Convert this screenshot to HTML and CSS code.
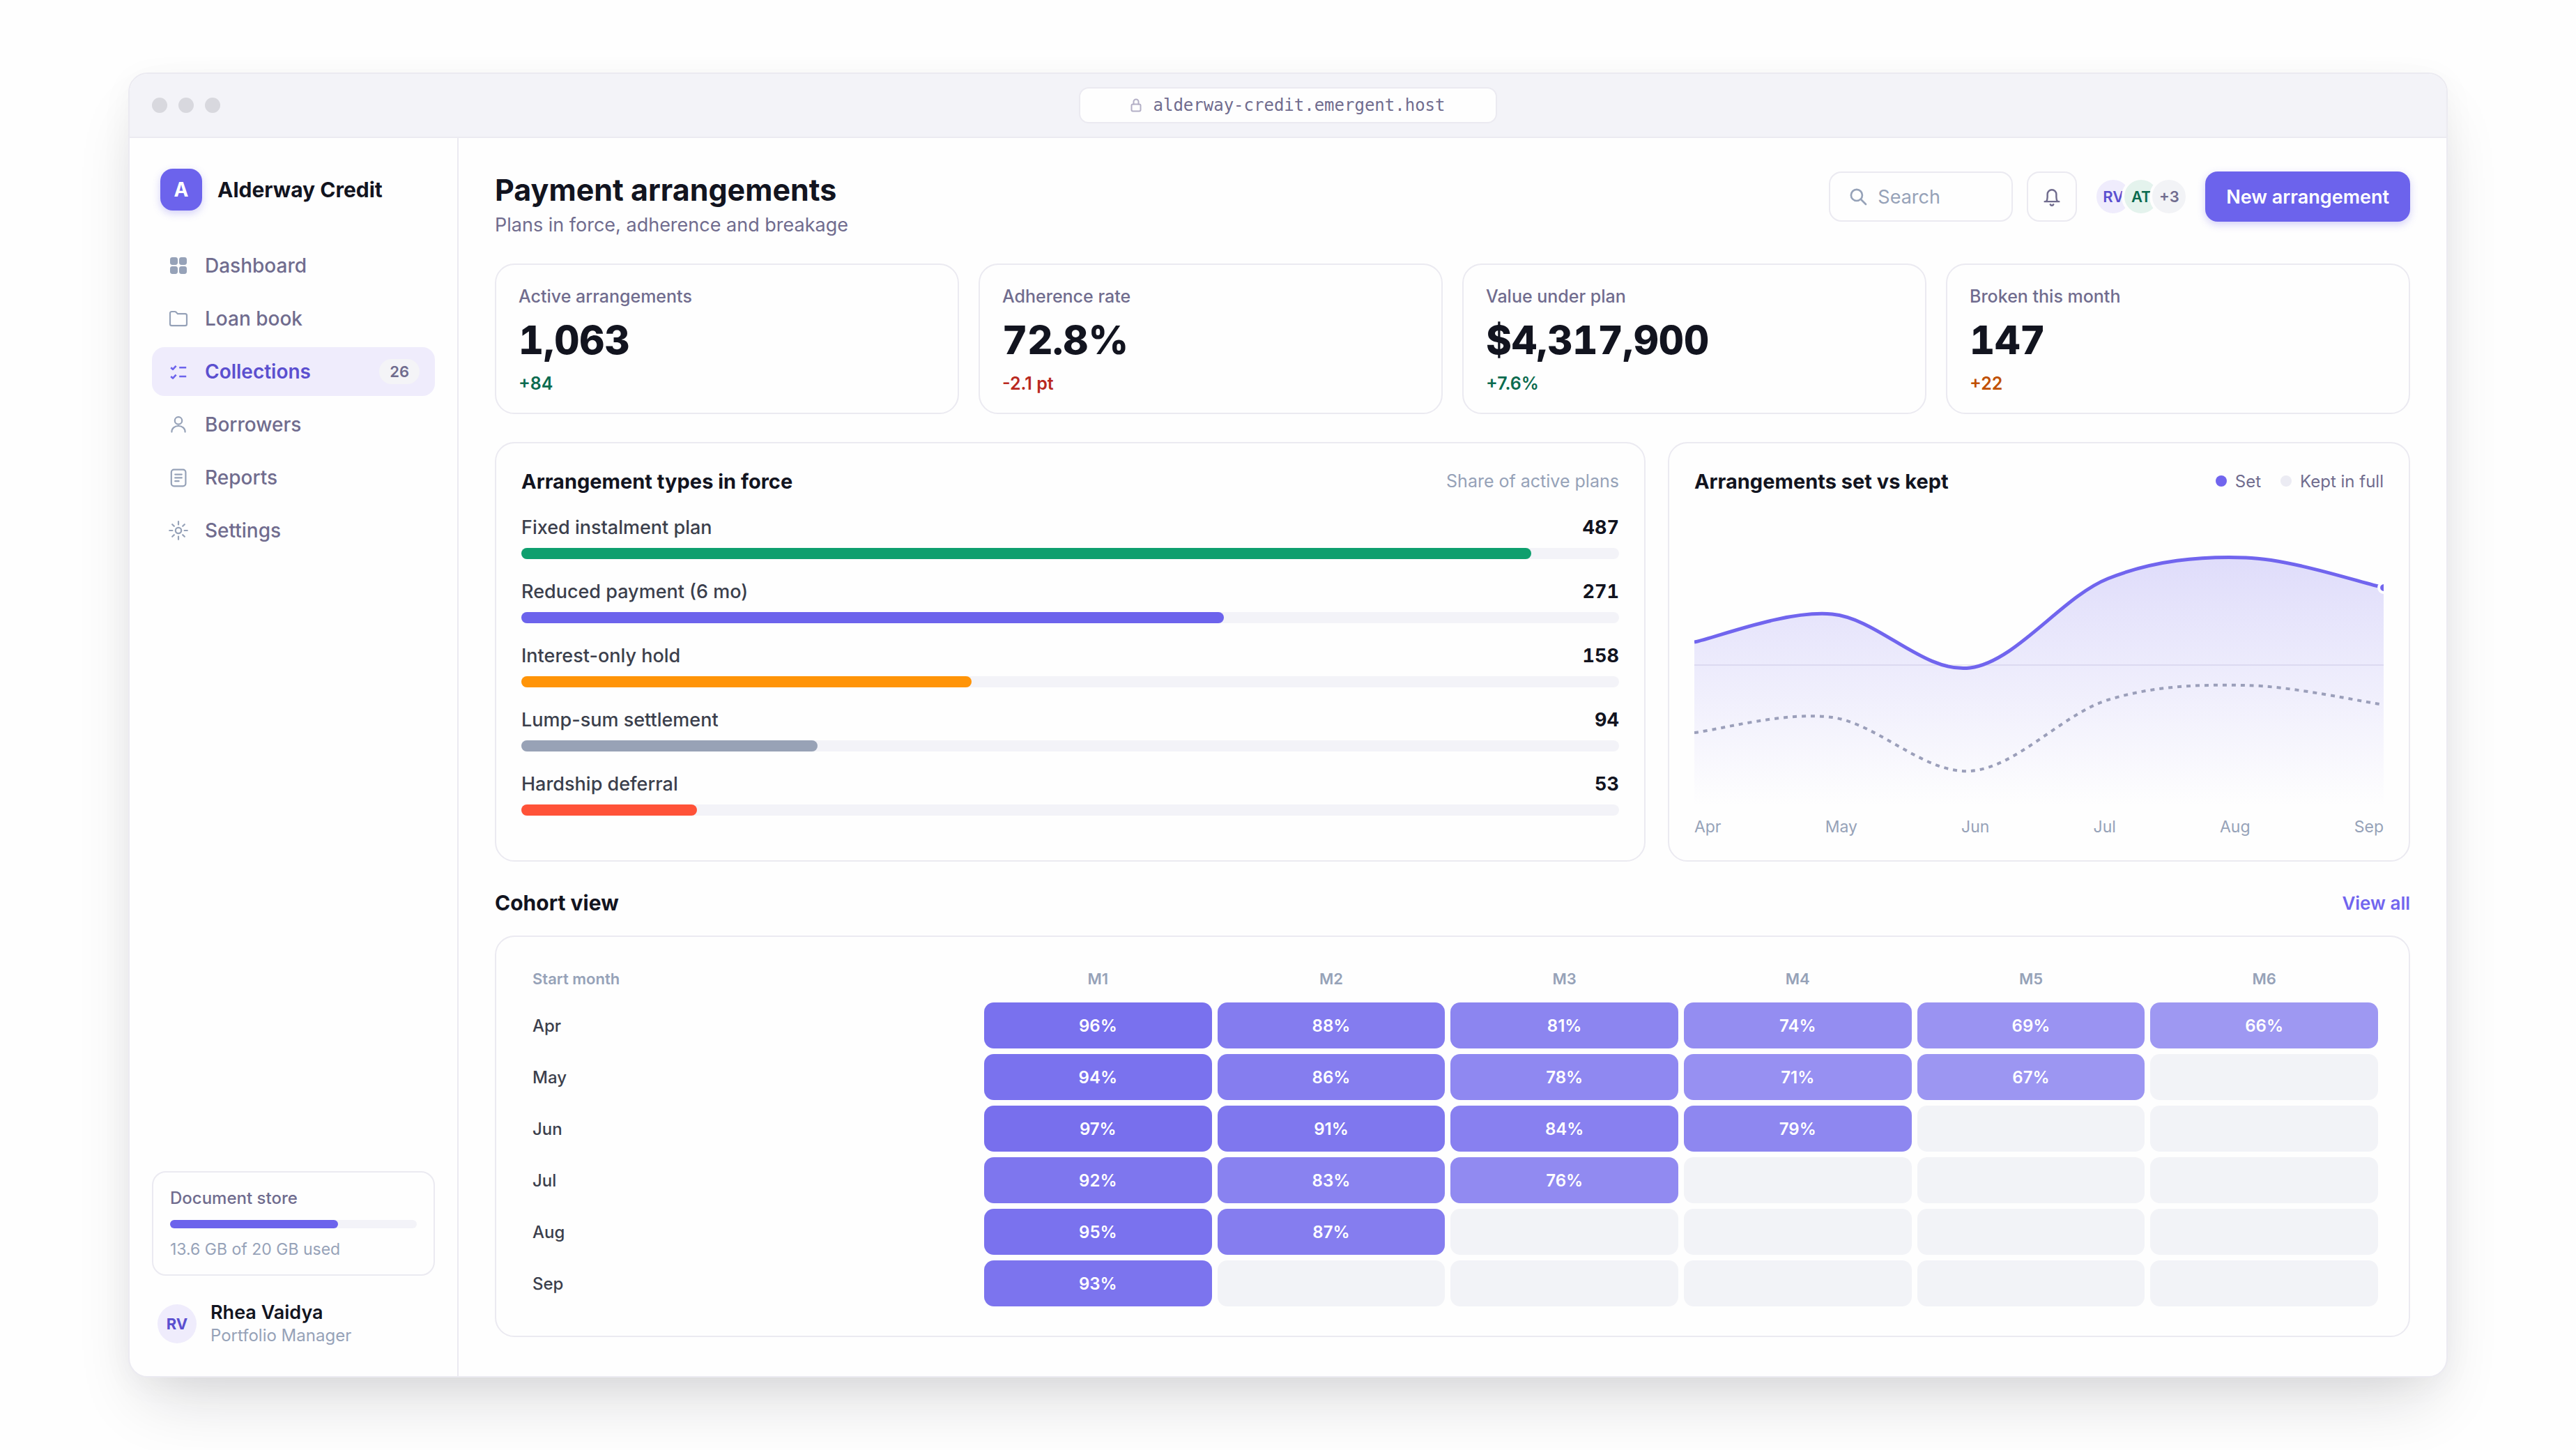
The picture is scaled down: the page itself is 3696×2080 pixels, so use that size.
FILE: index.html
```html
<!DOCTYPE html>
<html lang="en">
<head>
<meta charset="utf-8">
<title>Payment arrangements – Alderway Credit</title>
<link rel="stylesheet" href="styles.css">
</head>
<body>
<div class="window">
  <div class="titlebar">
    <div class="lights"><span></span><span></span><span></span></div>
    <div class="address">
      <svg class="lock" viewBox="0 0 16 20"><rect x="1.5" y="8.5" width="13" height="10" rx="2"/><path d="M4.500 8.500V5a3.500 3.500 0 0 1 7 0v3.500"/></svg>
      <span>alderway-credit.emergent.host</span>
    </div>
    <div></div>
  </div>
  <div class="shell">
    <aside class="sidebar">
      <div class="brand"><span class="brand-mark">A</span><span class="brand-name">Alderway Credit</span></div>
      <nav class="nav">
        <a href="#"><svg class="solid" viewBox="0 0 16 16"><rect x="2" y="2" width="5.500" height="5.500" rx="1.700"/><rect x="8.500" y="2" width="5.500" height="5.500" rx="1.700"/><rect x="2" y="8.500" width="5.500" height="5.500" rx="1.700"/><rect x="8.500" y="8.500" width="5.500" height="5.500" rx="1.700"/></svg>Dashboard</a>
        <a href="#"><svg viewBox="0 0 16 16"><path d="M2 4.200A1.200 1.200 0 0 1 3.200 3h2.200c.4 0 .7.100.9.400l1.200 1.200h5.300A1.200 1.200 0 0 1 14 5.800v6.100a1.200 1.200 0 0 1-1.200 1.200H3.200A1.200 1.200 0 0 1 2 11.900z"/></svg>Loan book</a>
        <a href="#" class="active" aria-current="page"><svg viewBox="0 0 16 16"><path d="M2.600 5.100l1.400 1.300 2.300-2.500M8.600 5.100h5M2.600 11.500l1.400 1.300 2.300-2.500M8.600 11.500h5"/></svg>Collections<span class="count">26</span></a>
        <a href="#"><svg viewBox="0 0 16 16"><circle cx="8" cy="5.200" r="2.600"/><path d="M3.200 13.300c0-2.600 2-4.300 4.800-4.300s4.800 1.700 4.800 4.300"/></svg>Borrowers</a>
        <a href="#"><svg viewBox="0 0 16 16"><rect x="2.900" y="2.300" width="10.300" height="11.900" rx="1.900"/><path d="M5.600 5.800h4.800M5.600 8.200h4.800M5.600 10.600h2.700"/></svg>Reports</a>
        <a href="#"><svg viewBox="0 0 16 16"><circle cx="8" cy="8" r="2.100"/><path d="M8 1.600v2.100M8 12.300v2.100M1.600 8h2.100M12.300 8h2.100M3.600 3.600l1.300 1.300M11.100 11.100l1.300 1.300M3.600 12.400l1.300-1.300M11.100 4.900l1.300-1.300"/></svg>Settings</a>
      </nav>
      <div class="store">
        <span class="store-title" id="store-label">Document store</span>
        <div class="meter" role="meter" aria-labelledby="store-label" aria-valuenow="68"><div class="fill" style="width:68%"></div></div>
        <span class="store-note">13.6 GB of 20 GB used</span>
      </div>
      <div class="user">
        <span class="user-avatar">RV</span>
        <div><div class="user-name">Rhea Vaidya</div><div class="user-role">Portfolio Manager</div></div>
      </div>
    </aside>
    <main class="main">
      <header class="page-head">
        <div>
          <h1>Payment arrangements</h1>
          <p>Plans in force, adherence and breakage</p>
        </div>
        <div class="tools">
          <label class="search">
            <svg viewBox="0 0 16 16"><circle cx="6.800" cy="6.800" r="4.600"/><path d="M10.300 10.300l4 4"/></svg>
            <input type="search" placeholder="Search" aria-label="Search">
          </label>
          <button class="bell" type="button" aria-label="Notifications"><svg viewBox="0 0 16 16"><path d="M2.500 11.800h11M3.700 11.700c.7-.9.9-1.800.9-3.300V6.200a3.400 3.400 0 0 1 6.800 0v2.200c0 1.500.2 2.400.9 3.300M6.800 14a1.300 1.300 0 0 0 2.400 0"/></svg></button>
          <div class="people"><span class="p-violet">RV</span><span class="p-green">AT</span><span class="p-grey">+3</span></div>
          <button class="primary" type="button">New arrangement</button>
        </div>
      </header>

      <section class="stats">
        <article class="stat"><h2>Active arrangements</h2><strong>1,063</strong><span class="good">+84</span></article>
        <article class="stat"><h2>Adherence rate</h2><strong>72.8%</strong><span class="bad">-2.1 pt</span></article>
        <article class="stat"><h2>Value under plan</h2><strong>$4,317,900</strong><span class="good">+7.6%</span></article>
        <article class="stat"><h2>Broken this month</h2><strong>147</strong><span class="warn">+22</span></article>
      </section>

      <section class="charts">
        <article class="panel">
          <div class="panel-head"><h2>Arrangement types in force</h2><span class="hint">Share of active plans</span></div>
          <ul class="bars">
            <li><span>Fixed instalment plan</span><b>487</b><div class="track"><div class="fill green" style="width:92%"></div></div></li>
            <li><span>Reduced payment (6 mo)</span><b>271</b><div class="track"><div class="fill" style="width:64%"></div></div></li>
            <li><span>Interest-only hold</span><b>158</b><div class="track"><div class="fill orange" style="width:41%"></div></div></li>
            <li><span>Lump-sum settlement</span><b>94</b><div class="track"><div class="fill slate" style="width:27%"></div></div></li>
            <li><span>Hardship deferral</span><b>53</b><div class="track"><div class="fill red" style="width:16%"></div></div></li>
          </ul>
        </article>
        <article class="panel">
          <div class="panel-head"><h2>Arrangements set vs kept</h2><div class="legend"><span class="set">Set</span><span class="kept">Kept in full</span></div></div>
          <svg class="plot" viewBox="0 0 990 404" preserveAspectRatio="none" role="img" aria-label="Arrangements set and kept in full, April to September">
            <defs><linearGradient id="area" x1="0" y1="0" x2="0" y2="1"><stop offset="0" stop-color="#7165ee" stop-opacity=".22"/><stop offset="1" stop-color="#7165ee" stop-opacity="0"/></linearGradient></defs>
            <path class="grid" d="M0 202H990"/>
            <path class="area" fill="url(#area)" d="M0 169C33 162.300 132 122.800 198 129C264 135.200 330 214.500 396 206C462 197.500 528 104.300 594 78C660 51.700 726 45.800 792 48C858 50.200 957 83.800 990 91V404H0z"/>
            <path class="kept-line" d="M0 299C33 295.300 132 267.800 198 277C264 286.200 330 358.200 396 354C462 349.800 528 272.500 594 252C660 231.500 726 229.800 792 231C858 232.200 957 254.300 990 259"/>
            <path class="set-line" d="M0 169C33 162.300 132 122.800 198 129C264 135.200 330 214.500 396 206C462 197.500 528 104.300 594 78C660 51.700 726 45.800 792 48C858 50.200 957 83.800 990 91"/>
            <circle class="end" cx="990" cy="91" r="7"/>
          </svg>
          <div class="axis"><span>Apr</span><span>May</span><span>Jun</span><span>Jul</span><span>Aug</span><span>Sep</span></div>
        </article>
      </section>

      <div class="section-head"><h2>Cohort view</h2><a href="#">View all</a></div>
      <section class="cohort">
        <table>
          <thead><tr><th scope="col">Start month</th><th scope="col">M1</th><th scope="col">M2</th><th scope="col">M3</th><th scope="col">M4</th><th scope="col">M5</th><th scope="col">M6</th></tr></thead>
          <tbody>
            <tr><th scope="row">Apr</th><td style="--v:.91">96%</td><td style="--v:.84">88%</td><td style="--v:.78">81%</td><td style="--v:.73">74%</td><td style="--v:.69">69%</td><td style="--v:.66">66%</td></tr>
            <tr><th scope="row">May</th><td style="--v:.90">94%</td><td style="--v:.83">86%</td><td style="--v:.76">78%</td><td style="--v:.71">71%</td><td style="--v:.67">67%</td><td class="none"></td></tr>
            <tr><th scope="row">Jun</th><td style="--v:.92">97%</td><td style="--v:.87">91%</td><td style="--v:.81">84%</td><td style="--v:.77">79%</td><td class="none"></td><td class="none"></td></tr>
            <tr><th scope="row">Jul</th><td style="--v:.88">92%</td><td style="--v:.80">83%</td><td style="--v:.75">76%</td><td class="none"></td><td class="none"></td><td class="none"></td></tr>
            <tr><th scope="row">Aug</th><td style="--v:.90">95%</td><td style="--v:.83">87%</td><td class="none"></td><td class="none"></td><td class="none"></td><td class="none"></td></tr>
            <tr><th scope="row">Sep</th><td style="--v:.89">93%</td><td class="none"></td><td class="none"></td><td class="none"></td><td class="none"></td><td class="none"></td></tr>
          </tbody>
        </table>
      </section>
    </main>
  </div>
</div>
</body>
</html>
```
FILE: styles.css
```css
:root {
  --violet: #6c63ec;
  --violet-bright: #7165ee;
  --violet-dark: #5b4fcf;
  --violet-soft: #efecfc;
  --ink: #12141f;
  --text: #3b3f4c;
  --muted: #706c8e;
  --faint: #96a2b8;
  --line: #ebeaf1;
  --wash: #f3f3f8;
}
* { box-sizing: border-box; margin: 0; }
body {
  min-height: 100vh;
  padding: 104px 184px;
  display: flex;
  background: #fefefe;
  color: var(--ink);
  font-family: Inter, "Liberation Sans", sans-serif;
  font-size: 27px;
}
a { color: inherit; text-decoration: none; }
button, input { font: inherit; }
svg { fill: none; stroke: currentColor; stroke-linecap: round; stroke-linejoin: round; flex: none; }

.window {
  flex: 1;
  display: flex;
  flex-direction: column;
  border: 2px solid var(--line);
  border-radius: 28px;
  background: #fefefe;
  overflow: hidden;
  box-shadow: 0 48px 96px -24px rgba(18, 19, 31, .16), 0 8px 48px rgba(18, 19, 31, .04);
}
.titlebar {
  display: grid;
  grid-template-columns: 1fr 600px 1fr;
  align-items: center;
  height: 92px;
  padding: 0 32px;
  background: var(--wash);
  border-bottom: 2px solid var(--line);
}
.lights { display: flex; gap: 16px; }
.lights span { width: 22px; height: 22px; border-radius: 50%; background: #d8d8de; }
.address {
  display: flex;
  align-items: center;
  justify-content: center;
  gap: 16px;
  height: 52px;
  border: 2px solid var(--line);
  border-radius: 14px;
  background: #fefefe;
  color: var(--muted);
  font: 24px "DejaVu Sans Mono", monospace;
}
.lock { width: 16px; height: 20px; stroke-width: 2; color: #b3afc6; }

.shell { flex: 1; display: flex; }
.sidebar {
  flex: none;
  width: 472px;
  display: flex;
  flex-direction: column;
  padding: 44px 32px 42px;
  border-right: 2px solid var(--line);
}
.brand { display: flex; align-items: center; gap: 22px; padding: 0 12px; }
.brand-mark {
  width: 60px;
  height: 60px;
  display: grid;
  place-items: center;
  border-radius: 18px;
  background: var(--violet);
  color: #fff;
  font-size: 28px;
  font-weight: 700;
  box-shadow: 0 4px 12px rgba(108, 99, 236, .3);
}
.brand-name { font-size: 30px; font-weight: 700; }
.nav { display: flex; flex-direction: column; gap: 6px; margin-top: 44px; }
.nav a {
  display: flex;
  align-items: center;
  gap: 22px;
  height: 70px;
  padding: 0 22px;
  border-radius: 18px;
  color: var(--muted);
  font-size: 28px;
  font-weight: 500;
}
.nav svg { width: 32px; height: 32px; stroke-width: 1.100; color: var(--faint); }
.nav svg.solid { fill: currentColor; stroke: none; }
.nav .active { background: var(--violet-soft); color: var(--violet-dark); font-weight: 600; }
.nav .active svg { color: var(--violet); stroke-width: 1.300; stroke-linecap: butt; }
.count {
  margin-left: auto;
  padding: 0 15px;
  border-radius: 18px;
  background: #f4f4f7;
  color: var(--muted);
  font-size: 22px;
  font-weight: 600;
  line-height: 36px;
}
.store {
  display: flex;
  flex-direction: column;
  margin-top: auto;
  padding: 20px 24px;
  border: 2px solid var(--line);
  border-radius: 20px;
}
.store-title { color: var(--muted); font-size: 24px; font-weight: 500; line-height: 34px; }
.meter { height: 12px; margin: 14px 0; border-radius: 6px; background: var(--wash); }
.fill { height: 100%; border-radius: 8px; background: var(--violet); }
.store-note { color: var(--faint); font-size: 23px; line-height: 32px; }
.user { display: flex; align-items: center; gap: 20px; margin-top: 36px; padding: 0 8px; }
.user-avatar {
  width: 56px;
  height: 56px;
  display: grid;
  place-items: center;
  border-radius: 50%;
  background: var(--violet-soft);
  color: var(--violet-dark);
  font-size: 22px;
  font-weight: 700;
}
.user-name { font-weight: 600; line-height: 34px; }
.user-role { color: var(--faint); font-size: 24px; line-height: 32px; }

.main { flex: 1; min-width: 0; padding: 46px 52px 56px; }
.page-head { display: flex; justify-content: space-between; align-items: flex-start; height: 134px; }
h1 { font-size: 43px; font-weight: 700; line-height: 56px; }
.page-head p { color: var(--muted); line-height: 46px; }
.tools { display: flex; align-items: center; gap: 20px; padding-top: 2px; }
.search {
  display: flex;
  align-items: center;
  gap: 14px;
  width: 264px;
  height: 72px;
  padding: 0 26px;
  border: 2px solid var(--line);
  border-radius: 18px;
  color: var(--faint);
}
.search svg { width: 28px; height: 28px; stroke-width: 1.500; }
.search input { width: 100%; padding: 0; border: 0; outline: 0; background: none; }
.search input::placeholder { color: var(--faint); opacity: 1; }
.bell {
  width: 72px;
  height: 72px;
  display: grid;
  place-items: center;
  padding: 0;
  border: 2px solid var(--line);
  border-radius: 18px;
  background: none;
  color: var(--muted);
}
.bell svg { width: 30px; height: 30px; stroke-width: 1.300; }
.people { display: flex; margin: 0 4px; padding-left: 16px; }
.people span {
  width: 56px;
  height: 56px;
  margin-left: -16px;
  display: grid;
  place-items: center;
  border: 4px solid #fefefe;
  border-radius: 50%;
  font-size: 22px;
  font-weight: 600;
}
.people .p-violet { background: var(--violet-soft); color: var(--violet-dark); }
.people .p-green { background: #e4f3ed; color: #0b6b4f; }
.people .p-grey { background: #f2f3f6; color: var(--muted); }
.primary {
  height: 72px;
  padding: 0 30px;
  border: 0;
  border-radius: 18px;
  background: var(--violet);
  color: #fff;
  font-weight: 600;
  box-shadow: 0 4px 12px rgba(108, 99, 236, .3);
}

.stats { display: grid; grid-template-columns: repeat(4, 1fr); gap: 28px; }
.stat, .panel, .cohort { border: 2px solid var(--line); border-radius: 28px; }
.stat { display: flex; flex-direction: column; height: 216px; padding: 28px 32px; }
.stat h2 { color: var(--muted); font-size: 25px; font-weight: 500; line-height: 34px; }
.stat strong { font-size: 56px; font-weight: 800; line-height: 92px; font-variant-numeric: tabular-nums; }
.stat span { font-size: 25px; font-weight: 600; line-height: 32px; }
.good { color: #0b6b4f; }
.bad { color: #b9291f; }
.warn { color: #c05000; }

.charts { display: grid; grid-template-columns: 155fr 100fr; gap: 32px; margin-top: 40px; }
.panel { padding: 34px 36px 32px; }
.panel-head { display: flex; align-items: center; justify-content: space-between; height: 40px; }
.panel h2 { font-size: 29px; font-weight: 700; }
.hint { color: var(--faint); font-size: 25px; }
.bars { display: flex; flex-direction: column; gap: 24px; margin-top: 26px; padding: 0; list-style: none; }
.bars li { display: grid; grid-template-columns: 1fr auto; row-gap: 8px; color: var(--text); font-weight: 500; line-height: 42px; padding-bottom: 2px; }
.bars b { color: var(--ink); font-weight: 700; font-variant-numeric: tabular-nums; }
.track { grid-column: 1 / -1; height: 16px; border-radius: 8px; background: var(--wash); }
.green { background: #0e9f6e; }
.orange { background: #ff9408; }
.slate { background: #98a2b6; }
.red { background: #ff5238; }
.legend { display: flex; gap: 28px; color: var(--muted); font-size: 24px; }
.legend span { display: flex; align-items: center; gap: 12px; }
.legend span::before { content: ""; width: 16px; height: 16px; border-radius: 50%; background: #ebebf3; }
.legend .set::before { background: var(--violet-bright); }
.plot { display: block; width: 100%; height: 404px; margin-top: 42px; }
.grid { stroke: var(--line); stroke-width: 2; }
.area { stroke: none; }
.set-line { stroke: var(--violet-bright); stroke-width: 5; stroke-linecap: butt; }
.kept-line { stroke: #9b9fba; stroke-width: 4; stroke-linecap: butt; stroke-dasharray: 6 7; }
.end { fill: var(--violet-bright); stroke: #fff; stroke-width: 4; }
.axis { display: flex; justify-content: space-between; margin-top: 14px; color: var(--faint); font-size: 23px; line-height: 32px; }

.section-head { display: flex; align-items: center; justify-content: space-between; height: 46px; margin: 36px 0 24px; }
.section-head h2 { font-size: 30px; font-weight: 700; }
.section-head a { color: var(--violet-bright); font-size: 26px; font-weight: 600; }
.cohort { padding: 34px 36px; }
table { width: 100%; table-layout: fixed; border-collapse: separate; border-spacing: 8px; font-size: 24px; }
th, td { height: 66px; padding: 0; text-align: center; }
thead th { height: 44px; padding-bottom: 8px; color: var(--faint); font-size: 22px; font-weight: 600; }
th:first-child { width: 648px; padding-left: 8px; text-align: left; }
tbody th { color: var(--text); font-weight: 500; }
td { border-radius: 14px; background: rgb(108 99 236 / var(--v)); color: #fff; font-weight: 600; }
td.none { background: #f2f3f7; }
```
